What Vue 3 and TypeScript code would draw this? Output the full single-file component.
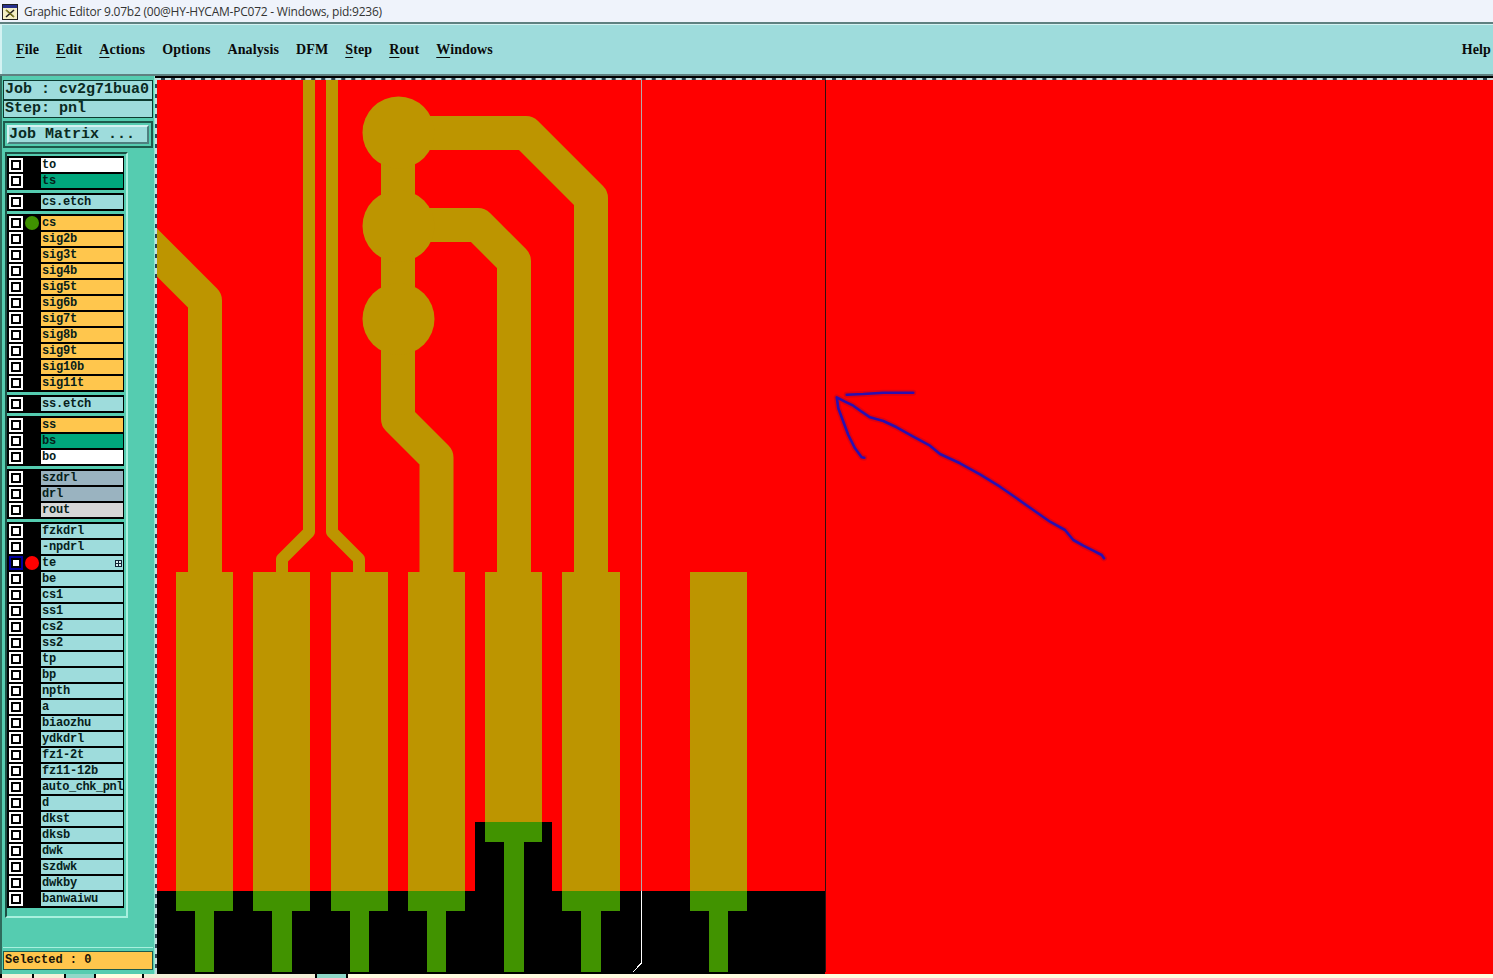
<script setup lang="ts">
interface Layer {
  name: string
  tone: string
  active?: boolean
  dot?: string
  more?: boolean
}

const menus = [
  { label: 'File', key: 'F', rest: 'ile' },
  { label: 'Edit', key: 'E', rest: 'dit' },
  { label: 'Actions', key: 'A', rest: 'ctions' },
  { label: 'Options', key: '', rest: 'Options' },
  { label: 'Analysis', key: '', rest: 'Analysis' },
  { label: 'DFM', key: '', rest: 'DFM' },
  { label: 'Step', key: 'S', rest: 'tep' },
  { label: 'Rout', key: 'R', rest: 'out' },
  { label: 'Windows', key: 'W', rest: 'indows' },
]

const plain = (names: string[], tone: string): Layer[] => names.map((name) => ({ name, tone }))

const groups: Layer[][] = [
  [
    { name: 'to', tone: 'white' },
    { name: 'ts', tone: 'green' },
  ],
  [{ name: 'cs.etch', tone: 'cyan' }],
  [
    { name: 'cs', tone: 'amber', dot: '#3f9200' },
    ...plain(['sig2b', 'sig3t', 'sig4b', 'sig5t', 'sig6b', 'sig7t', 'sig8b', 'sig9t', 'sig10b', 'sig11t'], 'amber'),
  ],
  [{ name: 'ss.etch', tone: 'cyan' }],
  [
    { name: 'ss', tone: 'amber' },
    { name: 'bs', tone: 'green' },
    { name: 'bo', tone: 'white' },
  ],
  [
    { name: 'szdrl', tone: 'steel' },
    { name: 'drl', tone: 'steel' },
    { name: 'rout', tone: 'silver' },
  ],
  [
    { name: 'fzkdrl', tone: 'cyan' },
    { name: '-npdrl', tone: 'cyan' },
    { name: 'te', tone: 'cyan', active: true, dot: '#ff0000', more: true },
    ...plain(
      [
        'be', 'cs1', 'ss1', 'cs2', 'ss2', 'tp', 'bp', 'npth', 'a', 'biaozhu', 'ydkdrl', 'fz1-2t', 'fz11-12b',
        'auto_chk_pnl', 'd', 'dkst', 'dksb', 'dwk', 'szdwk', 'dwkby', 'banwaiwu',
      ],
      'cyan',
    ),
  ],
]

// pads on the board: x range, and the stem under each one
const pads = [
  { x: 176, w: 57, stem: 195, stemW: 19 },
  { x: 253, w: 57, stem: 272, stemW: 20 },
  { x: 331, w: 57, stem: 350, stemW: 19 },
  { x: 408, w: 57, stem: 427, stemW: 19 },
  { x: 562, w: 58, stem: 581, stemW: 20 },
  { x: 690, w: 57, stem: 709, stemW: 19 },
]

const wideTraces = [
  'M130 225.5 L205 300.5 V572',
  'M398 132 V419 L436.5 457.5 V572',
  'M398 133 H526 L591 198 V572',
  'M398 225 H478 L514 261 V572',
]

const thinTraces = ['M309 80 V532 L282 559 V572', 'M332 80 V532 L359 559 V572']

const vias = [132.5, 226, 319]

const arrowShaft =
  '1104,558.3 1101.7,555 1093.3,550.7 1083.3,545.7 1073.3,540 1065,530 1050,521.7 1033.3,510 1016.7,498.3 1000,486.7 980,474.3 960,463.3 940,454 930,445.7 913.3,436.7 896.7,427.3 883.3,421 870,417.3 861.7,411.7 853.3,405.7 845,401.7 836.7,397.3 838.3,408.3 842.7,420 848.3,435 855,448.3 861.7,457.3 864.3,457.7'
const arrowTop = '846.7,394.7 863.3,394 883.3,392.7 913.3,392.7'

const tabs = ['pale w30', 'pale w30', 'teal w28', 'cream w46', 'pale w171', 'teal w29', 'cream grow']
</script>

<template>
  <div class="app">
    <header class="titlebar">
      <svg class="app-icon" width="16" height="16" viewBox="0 0 16 16">
        <rect x="0.5" y="0.5" width="15" height="15" fill="#f3efc4" stroke="#202020" />
        <rect x="1" y="1" width="14" height="3" fill="#27308c" />
        <path d="M4 6 L12 13 M12 6 L4 13" stroke="#1c1c1c" stroke-width="1.6" />
        <path d="M4 6 L12 13" stroke="#b8b400" stroke-width="0.8" />
      </svg>
      <span>Graphic Editor 9.07b2 (00@HY-HYCAM-PC072 - Windows, pid:9236)</span>
    </header>

    <nav class="menubar">
      <div class="menu-left">
        <span v-for="m in menus" :key="m.label" class="menu-item"><u v-if="m.key">{{ m.key }}</u>{{ m.rest }}</span>
      </div>
      <span class="menu-item">Help</span>
    </nav>

    <main class="body">
      <aside class="sidebar">
        <div class="info">
          <div class="info-line first">Job : cv2g71bua0</div>
          <div class="info-line second">Step: pnl</div>
        </div>
        <div class="matrix-frame">
          <div class="matrix-btn">Job Matrix ...</div>
        </div>

        <div class="layers-wrap">
          <div class="layers">
            <div v-for="(group, i) in groups" :key="i" class="group">
              <div v-for="layer in group" :key="layer.name" class="row">
                <span class="check" :class="{ on: layer.active }"><i></i></span>
                <span class="slot">
                  <b v-if="layer.dot" class="dot" :style="{ background: layer.dot }"></b>
                </span>
                <span class="name" :class="[layer.tone, { tight: layer.name.length > 11 }]">
                  {{ layer.name }}
                  <svg v-if="layer.more" class="more" width="7" height="7" viewBox="0 0 7 7">
                    <rect x="0.5" y="0.5" width="6" height="6" fill="#d8f0f0" stroke="#123" />
                    <path d="M3.5 1 V6 M1 3.5 H6" stroke="#123" />
                  </svg>
                </span>
              </div>
            </div>
          </div>
        </div>

        <div class="selected">Selected : 0</div>
      </aside>

      <div class="canvas">
        <svg width="1336" height="894" viewBox="157 80 1336 894" shape-rendering="crispEdges">
          <rect x="157" y="80" width="1336" height="894" fill="#ff0000" />
          <path d="M157 891 H475 V822 H552 V891 H825 V974 H157 Z" fill="#000" />

          <g fill="none" stroke="#bd9500" stroke-linejoin="round" shape-rendering="auto">
            <path v-for="d in wideTraces" :key="d" :d="d" stroke-width="34" />
            <path v-for="d in thinTraces" :key="d" :d="d" stroke-width="12" />
          </g>
          <circle v-for="cy in vias" :key="cy" cx="398.5" :cy="cy" r="36" fill="#bd9500" shape-rendering="auto" />

          <g v-for="p in pads" :key="p.x">
            <rect :x="p.x" y="572" :width="p.w" height="319" fill="#bd9500" />
            <rect :x="p.x" y="891" :width="p.w" height="20" fill="#419300" />
            <rect :x="p.stem" y="911" :width="p.stemW" height="61" fill="#419300" />
          </g>
          <rect x="485" y="572" width="57" height="250" fill="#bd9500" />
          <rect x="485" y="822" width="57" height="20" fill="#419300" />
          <rect x="504" y="842" width="20" height="130" fill="#419300" />

          <path d="M641.5 80 V891" stroke="#b5a8a8" fill="none" />
          <path d="M641.5 891 V963 L633 972" stroke="#fff" fill="none" />
          <path d="M825.5 80 V972" stroke="#301010" fill="none" />

          <g fill="none" stroke-linecap="round" stroke-linejoin="round" shape-rendering="auto">
            <polyline :points="arrowShaft" stroke="#a00030" stroke-opacity="0.35" stroke-width="6" />
            <polyline :points="arrowTop" stroke="#a00030" stroke-opacity="0.35" stroke-width="6" />
            <polyline :points="arrowShaft" stroke="#2a0fb0" stroke-width="2.6" />
            <polyline :points="arrowTop" stroke="#2a0fb0" stroke-width="2.6" />
          </g>
        </svg>
      </div>
    </main>

    <footer class="tabs">
      <span v-for="(t, i) in tabs" :key="i" class="tab" :class="t"></span>
    </footer>
  </div>
</template>

<style>
html,
body {
  margin: 0;
  overflow: hidden;
}
</style>

<style scoped>
.app {
  width: 1493px;
  height: 978px;
  display: flex;
  flex-direction: column;
  overflow: hidden;
  background: #000;
}

.titlebar {
  height: 22px;
  flex: none;
  display: flex;
  align-items: center;
  gap: 6px;
  padding-left: 2px;
  background: #eff3fb;
  color: #333;
  font: 12px "Open Sans", "Noto Sans", sans-serif;
  letter-spacing: -0.23px;
}

.app-icon {
  flex: none;
  margin-top: 1px;
}

.menubar {
  height: 50px;
  flex: none;
  box-sizing: content-box;
  display: flex;
  align-items: center;
  justify-content: space-between;
  padding: 0 2px 0 16px;
  background: #9edcdc;
  border-top: 2px solid #5f8080;
  border-bottom: 2px solid #5f8080;
  box-shadow: inset 2px 1px 0 #d4f2f2;
  font: bold 14px "Liberation Serif", serif;
  letter-spacing: 0.12px;
  color: #0a0a0a;
}

.menu-left {
  display: flex;
  gap: 17px;
}

.menu-item {
  padding-top: 2px;
}

.menu-item u {
  text-underline-offset: 3px;
}

.body {
  flex: 1;
  min-height: 0;
  display: flex;
}

.sidebar {
  width: 155px;
  flex: none;
  box-sizing: border-box;
  display: flex;
  flex-direction: column;
  background: #55ccb0;
  border-left: 2px solid #2f6b5c;
  border-right: 1px solid #8fe6d2;
  padding: 4px 1px 0 1px;
  font-family: "Liberation Mono", monospace;
  font-weight: bold;
  color: #0a2a22;
}

.info {
  margin-bottom: 3px;
}

.info-line {
  height: 18px;
  background: #9edcdc;
  border: 1px solid #0d3b30;
  box-sizing: border-box;
  font-size: 15px;
  line-height: 16px;
  padding-left: 1px;
  white-space: nowrap;
  overflow: hidden;
}

.info-line.first {
  height: 20px;
  line-height: 18px;
  border-bottom-width: 0;
  border-bottom: 1px solid #0d3b30;
}

.matrix-frame {
  height: 27px;
  box-sizing: border-box;
  background: #55ccb0;
  border: 2px solid #1d5a4c;
  padding: 2px;
  margin-bottom: 4px;
}

.matrix-btn {
  height: 100%;
  box-sizing: border-box;
  background: #9edcdc;
  border-top: 2px solid #d4f2f2;
  border-left: 2px solid #d4f2f2;
  border-right: 2px solid #4d7f7f;
  border-bottom: 2px solid #4d7f7f;
  font-size: 15px;
  line-height: 15px;
  white-space: nowrap;
}

.layers-wrap {
  flex: 1;
  min-height: 0;
  border-bottom: 1px solid #a8f0de;
  margin-bottom: 3px;
}

.layers {
  width: 123px;
  box-sizing: border-box;
  border-top: 2px solid #1d4f44;
  border-left: 2px solid #1d4f44;
  border-right: 2px solid #a8f0de;
  border-bottom: 2px solid #a8f0de;
  padding: 2px 2px 8px 0;
  display: flex;
  flex-direction: column;
  gap: 3px;
  margin-left: 2px;
}

.group {
  background: #000;
  padding: 1px;
  width: 117px;
  box-sizing: border-box;
}

.row {
  height: 16px;
  display: flex;
  align-items: stretch;
}

.check {
  width: 14px;
  height: 14px;
  margin: 1px 0 0 1px;
  flex: none;
  box-sizing: border-box;
  background: #fff;
  padding: 2px;
  display: block;
}

.check i {
  display: block;
  width: 10px;
  height: 10px;
  box-sizing: border-box;
  background: #fff;
  border: 2px solid #000;
}

.check.on {
  background: #0000a0;
}

.slot {
  width: 18px;
  flex: none;
  display: flex;
  align-items: center;
  justify-content: center;
}

.dot {
  width: 14px;
  height: 14px;
  border-radius: 50%;
}

.name {
  flex: 1;
  min-width: 0;
  margin: 1px 0;
  padding-left: 1px;
  position: relative;
  font-size: 12px;
  line-height: 14px;
  letter-spacing: -0.2px;
  white-space: nowrap;
  overflow: hidden;
  color: #06201a;
}

.name.tight {
  letter-spacing: -0.45px;
}

.name.white { background: #fff; }
.name.green { background: #00a77c; }
.name.cyan { background: #9edcdc; }
.name.amber { background: #ffc64d; }
.name.steel { background: #9ab3c0; }
.name.silver { background: #d6d6d6; }

.more {
  position: absolute;
  right: 1px;
  top: 4px;
}

.selected {
  height: 19px;
  flex: none;
  margin: 0 0 4px 0;
  box-sizing: border-box;
  background: #ffc64d;
  border: 1px solid #1d5a4c;
  font-size: 12px;
  line-height: 16px;
  padding-left: 1px;
  color: #1a1408;
}

.canvas {
  flex: 1;
  min-width: 0;
  margin-top: 2px;
  border-top: 2px dashed #c4dede;
  border-left: 2px dashed #c4dede;
  background: #2a4452;
  overflow: hidden;
}

.canvas svg {
  display: block;
}

.tabs {
  height: 4px;
  flex: none;
  display: flex;
  gap: 2px;
  padding-left: 2px;
}

.tab.w30 { width: 30px; }
.tab.w28 { width: 28px; }
.tab.w46 { width: 46px; }
.tab.w171 { width: 171px; }
.tab.w29 { width: 29px; }
.tab.grow { flex: 1; }
.tab.pale { background: #f3f0d8; }
.tab.teal { background: #8fd8c8; }
.tab.cream { background: #fffde0; }
</style>
